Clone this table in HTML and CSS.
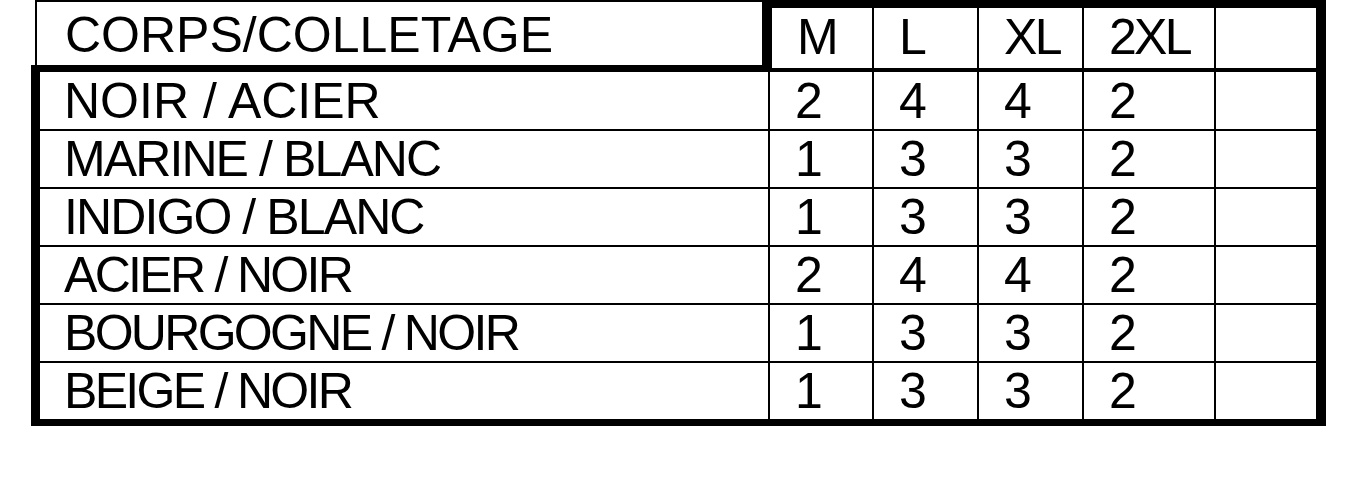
FILE: index.html
```html
<!DOCTYPE html>
<html lang="fr">
<head>
<meta charset="utf-8">
<title>Corps / Colletage</title>
<link rel="stylesheet" href="styles.css">
</head>
<body>
<div class="sheet">
  <div class="head">
    <div class="head-label">CORPS/COLLETAGE</div>
    <div class="head-sizes">
      <div class="hcell">M</div>
      <div class="hcell">L</div>
      <div class="hcell tight">XL</div>
      <div class="hcell tight">2XL</div>
      <div class="hcell"></div>
    </div>
  </div>
  <div class="grid">
    <div class="cell label">NOIR / ACIER</div><div class="cell">2</div><div class="cell">4</div><div class="cell">4</div><div class="cell">2</div><div class="cell"></div>
    <div class="cell label snug">MARINE / BLANC</div><div class="cell">1</div><div class="cell">3</div><div class="cell">3</div><div class="cell">2</div><div class="cell"></div>
    <div class="cell label snug">INDIGO / BLANC</div><div class="cell">1</div><div class="cell">3</div><div class="cell">3</div><div class="cell">2</div><div class="cell"></div>
    <div class="cell label tight">ACIER / NOIR</div><div class="cell">2</div><div class="cell">4</div><div class="cell">4</div><div class="cell">2</div><div class="cell"></div>
    <div class="cell label tight">BOURGOGNE / NOIR</div><div class="cell">1</div><div class="cell">3</div><div class="cell">3</div><div class="cell">2</div><div class="cell"></div>
    <div class="cell label tight">BEIGE / NOIR</div><div class="cell">1</div><div class="cell">3</div><div class="cell">3</div><div class="cell">2</div><div class="cell"></div>
  </div>
</div>
</body>
</html>
```
FILE: styles.css
```css
* { box-sizing: border-box; }
html, body { margin: 0; background: #fff; }
body {
  font-family: "Liberation Sans", Arial, sans-serif;
  color: #000;
  font-size: 50px;
}
.sheet { width: 1326px; }
.head {
  display: flex;
  margin-left: 35px;
  height: 65px;
}
.head-label {
  width: 727px;
  border-top: 2px solid #000;
  border-left: 2px solid #000;
  display: flex;
  align-items: center;
  padding-left: 28px;
  padding-top: 3px;
  white-space: nowrap;
}
.head-sizes {
  width: 564px;
  border-style: solid;
  border-color: #000;
  border-width: 8px 10px 0 10px;
  display: grid;
  grid-template-columns: 100px 103px 103px 130px 100px;
  column-gap: 2px;
  background: #000;
}
.hcell {
  background: #fff;
  display: flex;
  align-items: center;
  padding-left: 25px;
  padding-bottom: 2px;
}
.grid {
  margin-left: 31px;
  width: 1295px;
  border-style: solid;
  border-color: #000;
  border-width: 7px 10px 7px 9px;
  display: grid;
  grid-template-columns: 728px 102px 103px 103px 130px 100px;
  grid-template-rows: 57px repeat(5, 56px);
  gap: 2px;
  background: #000;
}
.cell {
  background: #fff;
  display: flex;
  align-items: center;
  padding-left: 25px;
  white-space: nowrap;
}
.cell.label { padding-left: 24px; }
.snug { letter-spacing: -1.9px; }
.tight { letter-spacing: -2.7px; }
```
